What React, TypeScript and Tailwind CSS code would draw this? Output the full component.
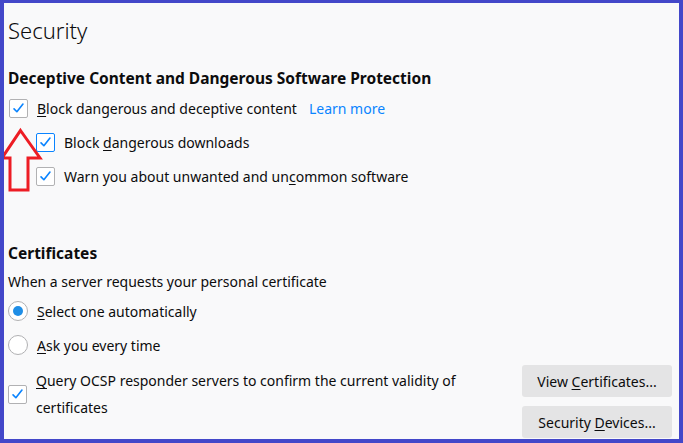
import React from "react";

/* ---------- piezas ---------- */
function Check({ focused = false }: { focused?: boolean }) {
  return (
    <span
      className={`flex h-[19px] w-[19px] shrink-0 items-center justify-center rounded-[2px] border bg-white ${
        focused ? "border-[#0a84ff]" : "border-[#b1b1b3]"
      }`}
    >
      <svg width="13" height="13" viewBox="0 0 16 16" fill="none">
        <path d="M2.5 8.5 L6 12 L13.5 2.5" stroke="#0a84ff" strokeWidth="2" strokeLinecap="round" strokeLinejoin="round" />
      </svg>
    </span>
  );
}

function Radio({ on = false }: { on?: boolean }) {
  return (
    <span className="flex h-[20px] w-[20px] shrink-0 items-center justify-center rounded-full border border-[#b1b1b3] bg-white">
      {on && <span className="h-[10px] w-[10px] rounded-full bg-[#1f8ee6]" />}
    </span>
  );
}

function U({ children }: { children: React.ReactNode }) {
  return <span className="underline underline-offset-2">{children}</span>;
}

/* ---------- App ---------- */
export default function App() {
  return (
    <div
      className="relative h-[443px] w-[683px] overflow-hidden border-x-[4px] border-t-[3px] border-b-[4px] border-[#4347c9] bg-[#f9f9fa] text-[14px] text-[#0c0c0d]"
      style={{ fontFamily: '"Segoe UI", "Noto Sans", sans-serif' }}
    >
      <div className="pl-[4px]">
        <h1 className="mt-[13px] text-[22px] font-light leading-[28px]">Security</h1>

        <h2 className="mt-[23px] text-[15.5px] font-bold leading-[22px]">
          Deceptive Content and Dangerous Software Protection
        </h2>

        <div className="mt-[9px] flex h-[20px] items-center">
          <span className="ml-[1px]"><Check /></span>
          <span className="ml-[9px]"><U>B</U>lock dangerous and deceptive content</span>
          <span className="ml-[12px] text-[#0a84ff]">Learn more</span>
        </div>

        <div className="mt-[14px] flex h-[20px] items-center pl-[28px]">
          <Check focused />
          <span className="ml-[9px]">Block <U>d</U>angerous downloads</span>
        </div>

        <div className="mt-[14px] flex h-[20px] items-center pl-[28px]">
          <Check />
          <span className="ml-[9px]">Warn you about unwanted and un<U>c</U>ommon software</span>
        </div>

        <h2 className="mt-[56px] text-[15.5px] font-bold leading-[22px]">Certificates</h2>

        <p className="mt-[8px] leading-[20px]">When a server requests your personal certificate</p>

        <div className="mt-[9px] flex h-[20px] items-center">
          <Radio on />
          <span className="ml-[9px]"><U>S</U>elect one automatically</span>
        </div>

        <div className="mt-[14px] flex h-[20px] items-center">
          <Radio />
          <span className="ml-[9px]"><U>A</U>sk you every time</span>
        </div>

        <div className="mt-[10px] flex items-start justify-between pr-[7px]">
          <div className="mt-[2px] flex items-center">
            <Check />
            <span className="ml-[9px] w-[440px] leading-[27px]">
              <U>Q</U>uery OCSP responder servers to confirm the current validity of certificates
            </span>
          </div>
          <div className="flex flex-col gap-[9px]">
            <button className="h-[32px] w-[150px] rounded-[3px] bg-[#e4e4e5] text-[#0c0c0d]">
              View <U>C</U>ertificates...
            </button>
            <button className="h-[32px] w-[150px] rounded-[3px] bg-[#e4e4e5] text-[#0c0c0d]">
              Security <U>D</U>evices...
            </button>
          </div>
        </div>
      </div>

      {/* flecha roja de anotación */}
      <svg className="absolute left-[-4px] top-[123px]" width="44" height="68" viewBox="0 0 44 68" fill="none">
        <path
          d="M20.5 4.5 L40 32 L28 32 L28 64 L10 64 L10 32 L2 32 Z"
          stroke="#ed1c24"
          strokeWidth="3"
          strokeLinejoin="miter"
        />
      </svg>
    </div>
  );
}
